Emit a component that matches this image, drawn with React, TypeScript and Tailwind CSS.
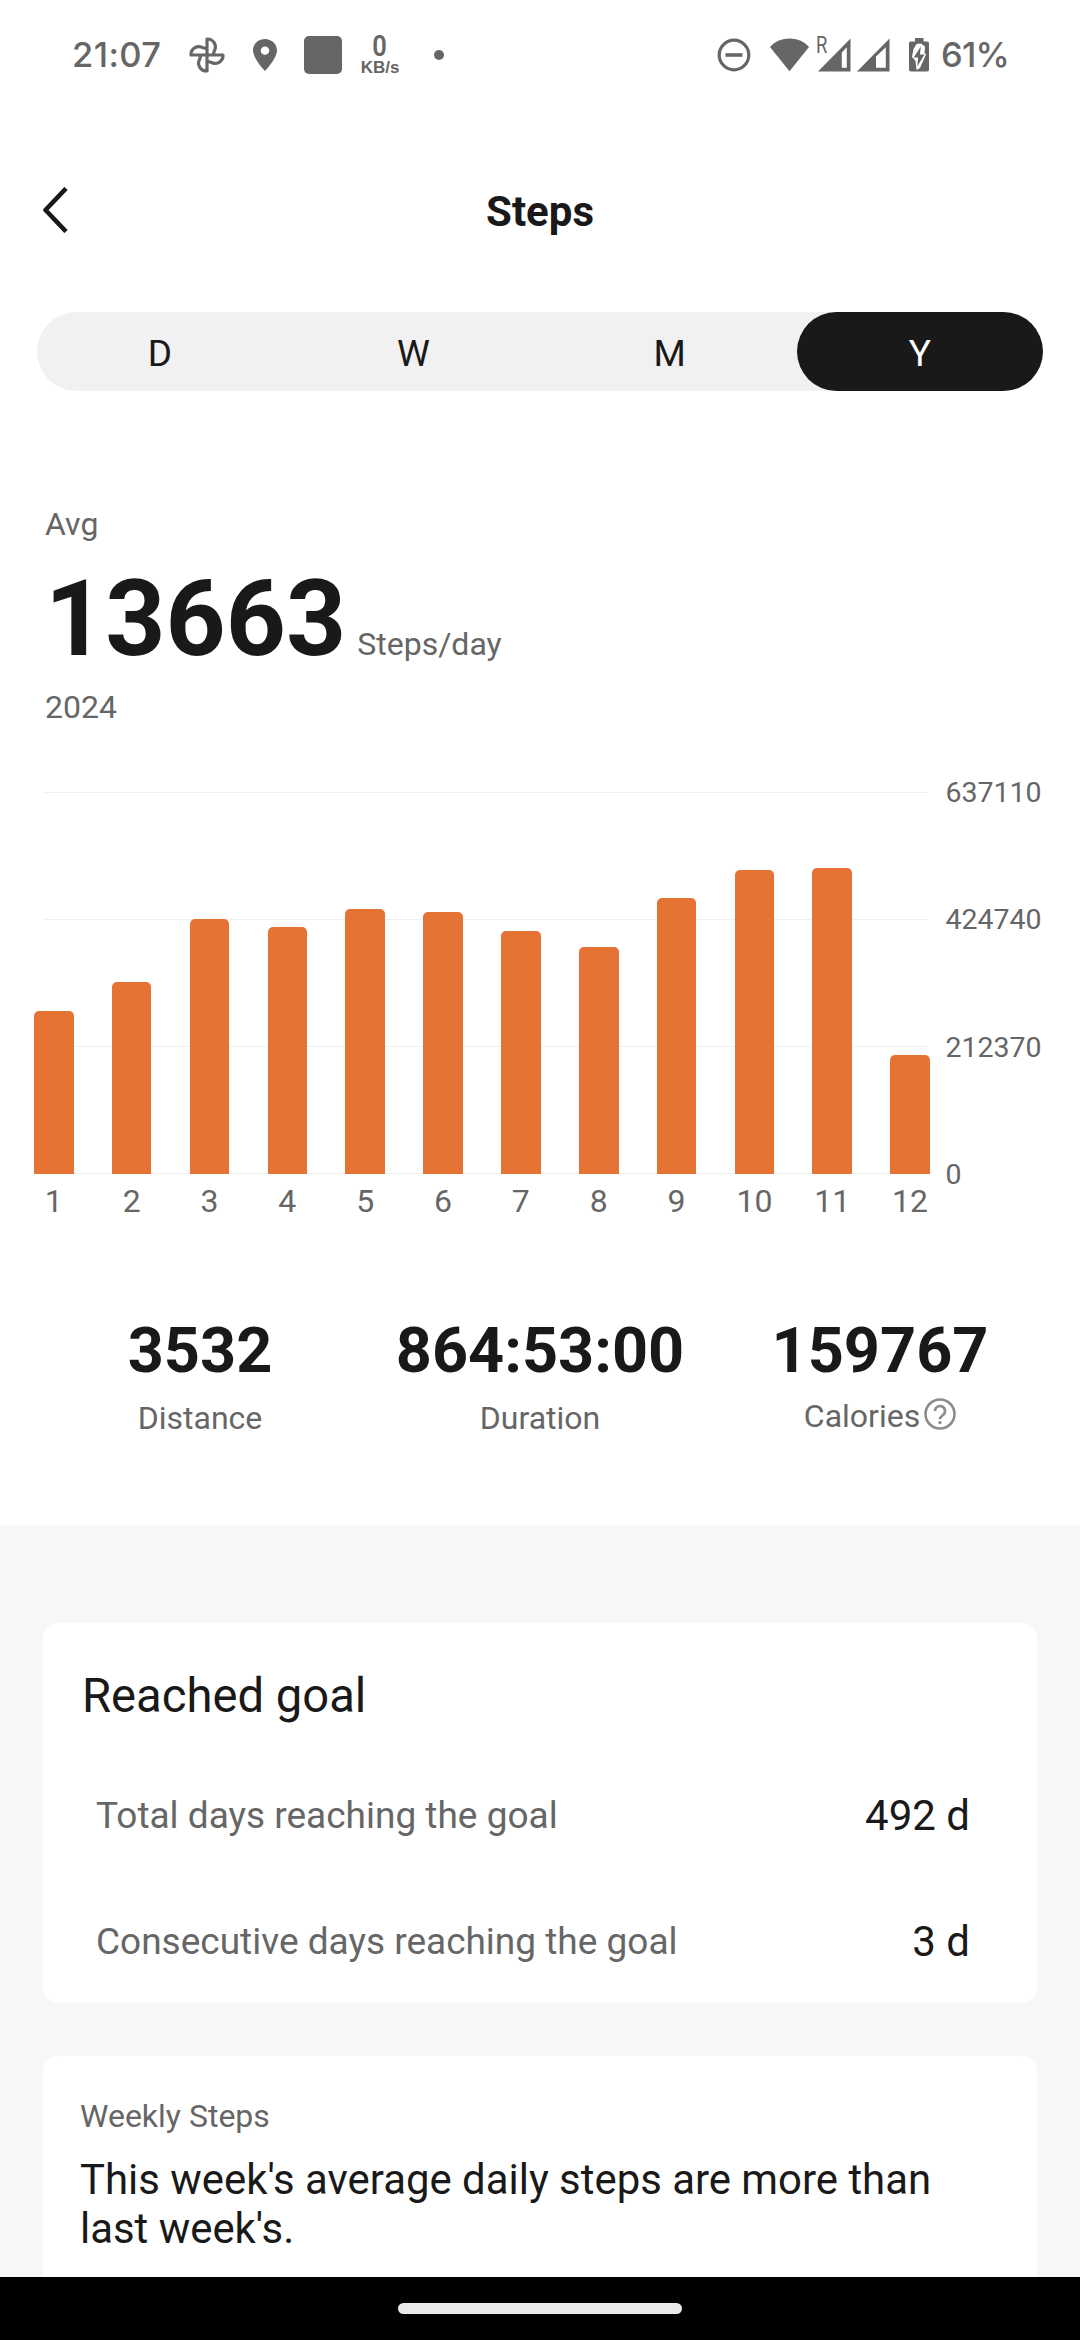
import React from "react";

const months = [
  { label: "1", height: 163 },
  { label: "2", height: 192.5 },
  { label: "3", height: 254.8 },
  { label: "4", height: 247.5 },
  { label: "5", height: 265 },
  { label: "6", height: 262 },
  { label: "7", height: 243.5 },
  { label: "8", height: 227 },
  { label: "9", height: 276.5 },
  { label: "10", height: 303.7 },
  { label: "11", height: 305.8 },
  { label: "12", height: 119 },
];

const ticks = ["637110", "424740", "212370", "0"];

function PinwheelIcon() {
  return (
    <svg className="h-9 w-9" viewBox="-18 -18 36 36" fill="none" stroke="currentColor" strokeWidth="3.2" strokeLinejoin="round">
      {[0, 90, 180, 270].map((a) => (
        <path key={a} transform={`rotate(${a})`} d="M0 0V-16a8 8 0 0 1 7.2 12.2L6.2 0" />
      ))}
    </svg>
  );
}

function StatusBar() {
  return (
    <div className="flex h-[110px] items-center text-[#666666]">
      <div className="ml-[72px] w-[117px] font-['Inter'] text-[34.5px] leading-none font-[450] tracking-[0.4px]">21:07</div>
      <PinwheelIcon />
      <svg className="ml-7 h-8 w-6" viewBox="5 2 14 20" preserveAspectRatio="none" fill="currentColor">
        <path d="M12 2C8.13 2 5 5.13 5 9c0 5.25 7 13 7 13s7-7.75 7-13c0-3.87-3.13-7-7-7zm0 9.9a2.5 2.6 0 1 1 0-5.2 2.5 2.6 0 0 1 0 5.2z" />
      </svg>
      <div className="ml-[27px] h-[38px] w-[38px] rounded-[5px] bg-current" />
      <div className="ml-[18px] flex h-[40px] w-10 flex-col items-center justify-between">
        <span className="h-[22px] origin-center scale-x-[0.85] text-[30px] leading-[22px] font-semibold">0</span>
        <span className="h-[14px] font-['Liberation_Sans'] text-[17px] leading-[14px] font-bold">KB/s</span>
      </div>
      <div className="ml-[34px] h-2.5 w-2.5 rounded-full bg-current" />
      <svg className="ml-[273px] h-[34px] w-[34px]" viewBox="0 0 34 34" fill="none" stroke="currentColor">
        <circle cx="17" cy="17" r="14.8" strokeWidth="3.2" />
        <path d="M8.5 17h17" strokeWidth="3.6" />
      </svg>
      <svg className="mr-[7px] ml-[19px] h-[34px] w-[39px]" viewBox="0 0 39 34" fill="currentColor">
        <path d="M0 9C10-2.2 29-2.2 39 9L19.5 33.3z" />
      </svg>
      <div className="-mt-[18px] h-[18px] w-[2px] origin-left scale-x-[0.8] text-[23px] leading-[18px]">R</div>
      <svg className="h-[34px] w-[33px]" viewBox="0 0 33 34" fill="currentColor" fillRule="evenodd">
        <path d="M0 33.5L32.5 .5v33zM23.8 14.5v15.2h5V9.3z" />
      </svg>
      <svg className="ml-[6px] h-[34px] w-[33px]" viewBox="0 0 33 34" fill="currentColor" fillRule="evenodd">
        <path d="M0 33.5L32.5 .5v33zM19 18.6v11.1h9.8V9.3z" />
      </svg>
      <svg className="ml-[19px] h-[34px] w-5" viewBox="0 0 20 34" fill="currentColor">
        <path d="M6 0h8.5v3.5h3.7A1.8 1.8 0 0 1 20 5.3v26.4a1.8 1.8 0 0 1-1.8 1.8H1.8A1.8 1.8 0 0 1 0 31.7V5.3a1.8 1.8 0 0 1 1.8-1.8H6z" />
        <path d="M7.5 6L12 5.5l4 3-.5 6.500 1.500 1.500L11 30l-3.500 2-1-9L3 19l1.500-8z" fill="white" />
        <path d="M11.800 8.500L4.800 19.500h4.400L8.200 28.500 15.500 16.500h-4.600z" />
      </svg>
      <div className="ml-[12px] font-['Inter'] text-[34.5px] leading-none font-[450] tracking-[-0.8px]">61%</div>
    </div>
  );
}

function Header() {
  return (
    <div className="grid h-[202px] grid-cols-[1fr_auto_1fr] items-center">
      <svg className="-mt-0.5 ml-[42px] h-[46px] w-[27px]" viewBox="0 0 27 46" fill="none" stroke="#191919" strokeWidth="4.6" strokeLinejoin="round">
        <path d="M24 1.5L3.5 23 24 44.5" />
      </svg>
      <h1 className="pt-0.5 text-[42px] leading-none font-bold">Steps</h1>
      <span />
    </div>
  );
}

function Tabs() {
  return (
    <div className="mx-[37px] flex h-[79px] justify-between rounded-full bg-[#f1f1f1] text-[37px] leading-[84px]">
      <div className="w-[246px] text-center">D</div>
      <div className="w-[246px] text-center">W</div>
      <div className="w-[246px] pl-1.5 text-center">M</div>
      <div className="w-[246px] rounded-full bg-[#191919] text-center text-white">Y</div>
    </div>
  );
}

function Chart() {
  return (
    <div className="mt-[66px] flex">
      <div className="w-[930px]">
        <div className="grid h-[382px]">
          <div className="ml-[45px] flex w-[883px] flex-col justify-between [grid-area:1/1]">
            {ticks.map((t) => (
              <div key={t} className="h-px bg-[#efefef]" />
            ))}
          </div>
          <div className="ml-[34px] flex items-end justify-between [grid-area:1/1]">
            {months.map((m) => (
              <div key={m.label} className="w-[39.6px] rounded-t-[5px] bg-[#e57333]" style={{ height: m.height }} />
            ))}
          </div>
        </div>
        <div className="mt-2 ml-[34px] flex justify-between text-[32px] leading-[38px] text-[#666666]">
          {months.map((m) => (
            <div key={m.label} className="flex w-[39.6px] justify-center">{m.label}</div>
          ))}
        </div>
      </div>
      <div className="mt-px ml-[15.5px] flex h-[383px] flex-col justify-between text-[28.5px] text-[#666666]">
        {ticks.map((t) => (
          <div key={t} className="flex h-px items-center">{t}</div>
        ))}
      </div>
    </div>
  );
}

function Stat({ value, children }: { value: string; children: React.ReactNode }) {
  return (
    <div className="flex w-[340px] flex-col items-center">
      <div className="h-16 text-[63px] leading-[66px] font-bold">{value}</div>
      <div className="mt-[17px] flex h-[38px] items-center text-[32px] leading-[38px] text-[#666666]">{children}</div>
    </div>
  );
}

function HelpIcon() {
  return (
    <svg className="-mt-[5px] ml-1 h-8 w-8" viewBox="0 0 32 32" fill="none" stroke="#8c8c8c" strokeWidth="2.6">
      <circle cx="16" cy="16" r="14.5" />
      <path d="M11 13a5 5 0 1 1 8 4c-2 1.4-3 2.3-3 4.2" />
      <circle cx="16" cy="24.6" r="1.7" fill="#8c8c8c" stroke="none" />
    </svg>
  );
}

function GoalRow({ label, value }: { label: string; value: string }) {
  return (
    <div className="flex h-[50px] items-center justify-between pr-[67px] pl-[53px]">
      <span className="pt-0.5 text-[37px] text-[#666666]">{label}</span>
      <span className="text-[42px]">{value}</span>
    </div>
  );
}

export default function App() {
  return (
    <div className="flex h-[2340px] w-[1080px] flex-col overflow-hidden bg-white font-['Roboto',sans-serif] text-[#191919]">
      <StatusBar />
      <Header />
      <Tabs />
      <div className="mt-[114px] ml-[45px] text-[32px] leading-[38px] text-[#666666]">Avg</div>
      <div className="mt-6 ml-[45px] flex h-[105px] items-baseline">
        <span className="text-[105px] leading-[105px] font-bold">13663</span>
        <span className="ml-[11px] text-[32px] text-[#666666]">Steps/day</span>
      </div>
      <div className="mt-4 ml-[45px] text-[32px] leading-[38px] text-[#666666]">2024</div>
      <Chart />
      <div className="mt-[98px] ml-[30px] flex">
        <Stat value="3532">Distance</Stat>
        <Stat value="864:53:00">Duration</Stat>
        <Stat value="159767">
          <div className="-mt-1 flex items-center">
            Calories
            <HelpIcon />
          </div>
        </Stat>
      </div>
      <div className="mt-[88px] flex min-h-0 flex-1 flex-col overflow-hidden bg-[#f7f7f7] px-[43px] pt-[98px]">
        <section className="h-[380px] shrink-0 rounded-[16px] bg-white pt-[45px]">
          <h2 className="pl-[39px] text-[47.2px] leading-[56px]">Reached goal</h2>
          <div className="mt-[66px] flex flex-col gap-[76px]">
            <GoalRow label="Total days reaching the goal" value="492 d" />
            <GoalRow label="Consecutive days reaching the goal" value="3 d" />
          </div>
        </section>
        <section className="mt-[53px] flex-1 rounded-t-[16px] bg-white pt-[41px] pl-[37px]">
          <div className="text-[32px] leading-[38px] text-[#666666]">Weekly Steps</div>
          <p className="mt-[20px] w-[880px] text-[41.9px] leading-[49px]">This week's average daily steps are more than last week's.</p>
        </section>
      </div>
      <div className="flex h-[63px] shrink-0 justify-center bg-black pt-[26px]">
        <div className="h-[11px] w-[284px] rounded-full bg-[#e9e9e9]" />
      </div>
    </div>
  );
}
